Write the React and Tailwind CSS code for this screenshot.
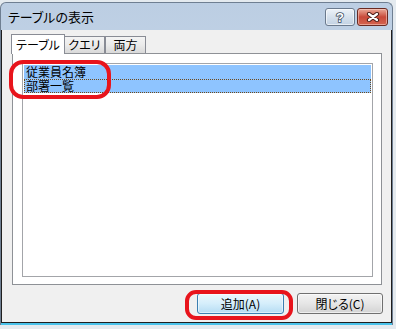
import React from "react";

function HelpButton() {
  return (
    <div className="w-[30px] h-[18px] rounded-[3px] border border-[#6b7a8d] bg-gradient-to-b from-[#eef3f9] via-[#d6e1ed] to-[#c2d2e3] flex items-center justify-center shadow-[inset_0_0_0_1px_rgba(255,255,255,0.6)]">
      <svg width="12" height="14" viewBox="0 0 12 14">
        <text x="6" y="12" textAnchor="middle" fontSize="13" fontWeight="bold" fontFamily="Liberation Sans, sans-serif" fill="#ffffff" stroke="#3b4c60" strokeWidth="1.6" paintOrder="stroke">?</text>
      </svg>
    </div>
  );
}

function CloseButton() {
  return (
    <div className="w-[31px] h-[18px] rounded-[3px] border border-[#6a2a22] bg-gradient-to-b from-[#e9a999] via-[#c8493a] to-[#d4644f] flex items-center justify-center shadow-[inset_0_0_0_1px_rgba(255,220,210,0.5)]">
      <svg width="14" height="10" viewBox="0 0 14 10">
        <path d="M3 2 L11 8 M11 2 L3 8" stroke="#4a1d18" strokeWidth="4.2" strokeLinecap="round" />
        <path d="M3 2 L11 8 M11 2 L3 8" stroke="#ffffff" strokeWidth="2.2" strokeLinecap="round" />
      </svg>
    </div>
  );
}

export default function App() {
  return (
    <div className="relative w-[396px] h-[329px] overflow-hidden bg-[#e4eaef] font-['Noto_Sans_CJK_JP',sans-serif] [font-feature-settings:'palt'] text-[12px] text-black">
      <div className="mt-[2px] w-[393px] h-[323px] rounded-t-[6px] border-t border-l border-r border-[#6f7f92] bg-gradient-to-b from-[#bccee3] to-[#d6e3f0] flex flex-col">
        {/* title bar */}
        <div className="h-[27px] flex items-center pl-[7px] pr-[4px]">
          <div className="flex-1 leading-[15px] text-[13px]">テーブルの表示</div>
          <div className="flex items-center gap-[2px] mt-[1px]">
            <HelpButton />
            <CloseButton />
          </div>
        </div>

        {/* client area */}
        <div className="flex-1 flex flex-col bg-[#f0f0f0] border-l border-r border-b border-[#1f1f1f] pt-[4px]">
          {/* tabs */}
          <div className="relative z-10 flex items-end h-[19px] pl-[9px]">
            <div className="relative z-10 w-[54px] h-[20px] mb-[-1px] bg-white border border-b-0 border-[#898c95] flex items-center justify-center leading-[14px]">
              テーブル
            </div>
            <div className="ml-[-1px] w-[41px] h-[17px] border border-b-0 border-[#898c95] bg-gradient-to-b from-[#f4f4f4] via-[#ebebeb] to-[#d9d9d9] flex items-center justify-center leading-[14px]">
              クエリ
            </div>
            <div className="w-[41px] h-[17px] border border-b-0 border-[#898c95] bg-gradient-to-b from-[#f4f4f4] via-[#ebebeb] to-[#d9d9d9] flex items-center justify-center leading-[14px]">
              両方
            </div>
          </div>

          {/* tab panel */}
          <div className="ml-[10px] w-[370px] h-[232px] border border-[#8e9196] bg-white p-[9px]">
            <div className="w-[351px] h-[214px] border border-[#a3a5a9] bg-white p-[1px]">
              <div className="h-[14px] bg-[#8ec4ff] pl-[2px] leading-[14px]">従業員名簿</div>
              <div className="h-[14px] bg-[#8ec4ff] pl-[2px] leading-[14px] outline outline-1 outline-dotted outline-[#6e4a1c] -outline-offset-1">部署一覧</div>
            </div>
          </div>

          {/* buttons */}
          <div className="mt-[8px] flex justify-end gap-[13px] pr-[8px]">
            <div className="w-[87px] h-[21px] rounded-[3px] border border-[#3c7fb1] bg-gradient-to-b from-[#ecf7fd] via-[#d5eefb] to-[#b5dcf3] shadow-[inset_0_0_0_1px_rgba(255,255,255,0.5)] flex items-center justify-center leading-[14px]">
              追加(A)
            </div>
            <div className="w-[86px] h-[21px] rounded-[3px] border border-[#707070] bg-gradient-to-b from-[#f3f3f3] via-[#e6e6e6] to-[#d3d3d3] shadow-[inset_0_0_0_1px_rgba(255,255,255,0.6)] flex items-center justify-center leading-[14px]">
              閉じる(C)
            </div>
          </div>
        </div>
        <div className="h-[2px] bg-[#49c2ea]" />
      </div>

      {/* red annotations */}
      <div className="absolute left-[9px] top-[60px] w-[102px] h-[39px] border-[4px] border-[#e8141c] rounded-[14px]" />
      <div className="absolute left-[185px] top-[290px] w-[108px] h-[30px] border-[4px] border-[#e8141c] rounded-[11px]" />
    </div>
  );
}
